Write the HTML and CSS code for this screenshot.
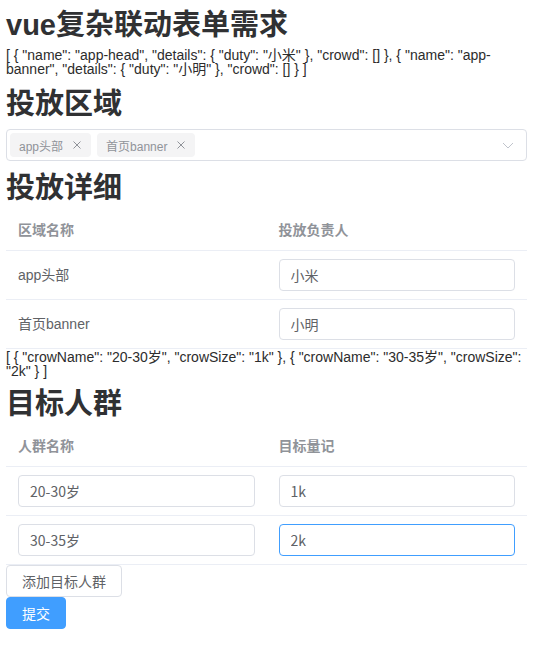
FILE: index.html
```html
<!DOCTYPE html>
<html lang="zh-CN">
<head>
  <meta charset="UTF-8" />
  <meta name="viewport" content="width=device-width, initial-scale=1.0"/>
  <title>vue复杂联动表单需求</title>
  <link rel="stylesheet" href="styles.css">
</head>
<body>
  <div class="app">
    <h1 class="title">vue复杂联动表单需求</h1>
    <div class="json">[ { "name": "app-head", "details": { "duty": "小米" }, "crowd": [] }, { "name": "app-banner", "details": { "duty": "小明" }, "crowd": [] } ]</div>

    <h2 class="title">投放区域</h2>
    <div class="select">
      <span class="tag">app头部<svg class="tag-close" viewBox="0 0 10 10"><path d="M1.5 1.5l7 7M8.5 1.5l-7 7"/></svg></span>
      <span class="tag">首页banner<svg class="tag-close" viewBox="0 0 10 10"><path d="M1.5 1.5l7 7M8.5 1.5l-7 7"/></svg></span>
      <svg class="select-arrow" viewBox="0 0 12 7"><path d="M1 1l5 5 5-5"/></svg>
    </div>

    <h2 class="title">投放详细</h2>
    <div class="table">
      <div class="row head">
        <div class="cell">区域名称</div>
        <div class="cell">投放负责人</div>
      </div>
      <div class="row">
        <div class="cell">app头部</div>
        <div class="cell"><input class="input" type="text" value="小米"/></div>
      </div>
      <div class="row">
        <div class="cell">首页banner</div>
        <div class="cell"><input class="input" type="text" value="小明"/></div>
      </div>
    </div>
    <div class="json">[ { "crowName": "20-30岁", "crowSize": "1k" }, { "crowName": "30-35岁", "crowSize": "2k" } ]</div>

    <h2 class="title">目标人群</h2>
    <div class="table">
      <div class="row head">
        <div class="cell">人群名称</div>
        <div class="cell">目标量记</div>
      </div>
      <div class="row">
        <div class="cell"><input class="input" type="text" value="20-30岁"/></div>
        <div class="cell"><input class="input" type="text" value="1k"/></div>
      </div>
      <div class="row">
        <div class="cell"><input class="input" type="text" value="30-35岁"/></div>
        <div class="cell"><input class="input is-focus" type="text" value="2k"/></div>
      </div>
    </div>
    <div><button class="btn">添加目标人群</button></div>
    <div><button class="btn btn-primary">提交</button></div>
  </div>
</body>
</html>
```

FILE: styles.css
```css
body {
  margin: 0;
  font-family: "Liberation Sans", "Noto Sans CJK SC", sans-serif;
  color: #2c2c2c;
  background-color: white;
}
.app {
  width: 521px;
  margin-left: 6px;
  padding-top: 8px;
}
.title {
  margin: 0;
  font-size: 29px;
  line-height: 34px;
  font-weight: bold;
  color: #303133;
}
.json {
  font-size: 14px;
  line-height: 14px;
  color: #2c2c2c;
  margin: 6px 0 11px;
}
.table + .json {
  margin-top: 1px;
  margin-bottom: 9px;
}
.select {
  display: flex;
  align-items: center;
  gap: 6px;
  height: 32px;
  box-sizing: border-box;
  border: 1px solid #dcdfe6;
  border-radius: 4px;
  padding-left: 3px;
  margin: 8px 0 10px;
}
.tag {
  display: flex;
  align-items: center;
  height: 24px;
  padding: 0 9px;
  box-sizing: border-box;
  background-color: #f4f4f5;
  border-radius: 4px;
  font-size: 12px;
  color: #909399;
}
.tag-close {
  width: 10px;
  height: 10px;
  margin-left: 9px;
  fill: none;
  stroke: #909399;
  stroke-width: 1;
}
.select-arrow {
  width: 12px;
  height: 7px;
  margin-left: auto;
  margin-right: 12px;
  fill: none;
  stroke: #c0c4cc;
  stroke-width: 1;
}
.table {
  font-size: 14px;
  color: #606266;
}
.row {
  display: grid;
  grid-template-columns: 1fr 1fr;
  align-items: center;
  border-bottom: 1px solid #ebeef5;
}
.cell {
  padding: 8px 12px;
  line-height: 23px;
}
.row.head .cell {
  padding: 14px 12px 8px;
  font-weight: bold;
  color: #909399;
}
.input {
  display: block;
  width: 100%;
  height: 32px;
  box-sizing: border-box;
  border: 1px solid #dcdfe6;
  border-radius: 4px;
  padding: 0 11px;
  font-family: "Noto Sans CJK SC", sans-serif;
  font-size: 14px;
  color: #606266;
  outline: none;
}
.input.is-focus {
  border-color: #409eff;
}
.btn {
  height: 32px;
  padding: 0 15px;
  border: 1px solid #dcdfe6;
  border-radius: 4px;
  background-color: white;
  font-family: "Noto Sans CJK SC", sans-serif;
  font-size: 14px;
  color: #606266;
  cursor: pointer;
}
.btn-primary {
  background-color: #409eff;
  border-color: #409eff;
  color: white;
}
```
